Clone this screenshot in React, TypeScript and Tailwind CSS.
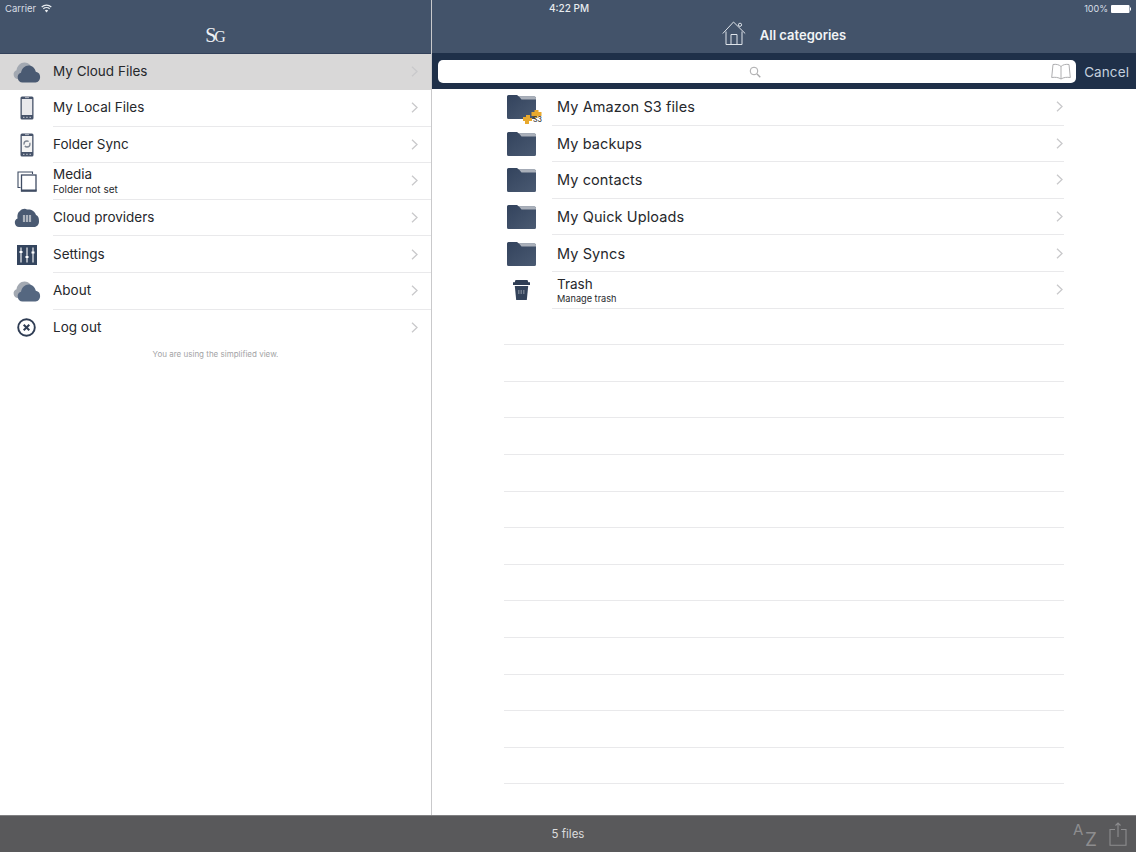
import React from "react";

const Chevron = () => (
  <svg width="7" height="11" viewBox="0 0 7 11" fill="none" className="shrink-0">
    <path d="M1 .8l5 4.700-5 4.700" stroke="#c9c9cb" strokeWidth="1.300" />
  </svg>
);

const Cloud = ({ back = "#a3a9b2", front = "#4a5a72" }: { back?: string; front?: string }) => (
  <svg width="28" height="21" viewBox="0 0 28 21">
    <path d="M5 17a4.500 4.500 0 0 1-1.500-8.700C4 4 7.500.5 11.500.5c2.500 0 4.500 1 6 3l-2 13.500z" fill={back} />
    <path d="M9.500 20.500a5 5 0 0 1-1.500-9.700C8.800 6.500 12 3.500 15.500 3.500c3.800 0 6.500 2.700 7.300 6.200A5.500 5.500 0 0 1 22.500 20.500z" fill={front} />
  </svg>
);

const Phone = ({ sync }: { sync?: boolean }) => (
  <svg width="14" height="24" viewBox="0 0 14 24">
    <rect x="0.500" y="0.500" width="13" height="23" rx="1.500" fill="#46536a" />
    <rect x="1.800" y="3" width="10.400" height="16" fill={sync ? "#f4f4f4" : "#e9e9ec"} />
    <rect x="5" y="1.300" width="4" height="0.800" fill="#c9ced6" />
    <path d="M3 21.300h1.500M6.200 21.300h1.500M9.500 21.300H11" stroke="#c9ced6" strokeWidth="1" />
    {sync && <circle cx="7" cy="11" r="3" fill="none" stroke="#7d8592" strokeWidth="1.300" strokeDasharray="7 1.500" />}
  </svg>
);

const Media = () => (
  <svg width="20" height="21" viewBox="0 0 20 21" fill="none">
    <path d="M3.500 16.500H1V1h14.500v2" stroke="#3f4c63" strokeWidth="1.100" />
    <rect x="4.500" y="4" width="14.500" height="16" fill="#fff" stroke="#3f4c63" strokeWidth="1.300" />
    <rect x="4" y="18.500" width="15.500" height="2" fill="#3f4c63" />
  </svg>
);

const Providers = () => (
  <svg width="26" height="22" viewBox="0 0 26 22">
    <path d="M5 20a4.500 4.500 0 0 1-1.500-8.600C3 8 4 5 6 4c1.500-2 5-3 7-1.500 4-.5 8 1.500 9 5.500 3 1.500 3 4 3 6.500 0 3-2 5.500-5 5.500z" fill="#4a5a72" />
    <path d="M10 8v7M13 8v7M16 8v7" stroke="#aeb4bd" strokeWidth="2.200" />
  </svg>
);

const Sliders = () => (
  <svg width="20" height="20" viewBox="0 0 20 20">
    <rect width="20" height="20" fill="#34455e" />
    <path d="M4 2.500v15M10 2.500v15M16 2.500v15" stroke="#fff" strokeWidth="1.100" />
    <path d="M2.500 7h3M8.500 12h3M14.500 7.500h3" stroke="#fff" strokeWidth="2" />
  </svg>
);

const LogOut = () => (
  <svg width="19" height="19" viewBox="0 0 19 19" fill="none">
    <circle cx="9.500" cy="9.500" r="8.300" stroke="#2f3d54" strokeWidth="1.900" />
    <path d="M6.700 6.700l5.600 5.600M12.300 6.700l-5.600 5.600" stroke="#2f3d54" strokeWidth="2" />
  </svg>
);

const Folder = ({ s3 }: { s3?: boolean }) => (
  <div className="relative w-[29px] h-[24px] shrink-0">
    <svg width="29" height="24" viewBox="0 0 29 24">
      <defs>
        <linearGradient id="folderFill" x1="0" y1="0" x2="1" y2="1">
          <stop offset="0" stopColor="#33435d" />
          <stop offset="1" stopColor="#4a5a72" />
        </linearGradient>
      </defs>
      <path d="M0 1.500A1.500 1.500 0 0 1 1.500 0H10l2 1.500h15.500A1.500 1.500 0 0 1 29 3v19.500a1.500 1.500 0 0 1-1.500 1.500h-26A1.500 1.500 0 0 1 0 22.500z" fill="url(#folderFill)" />
      <path d="M12 1.500h15.500A1.500 1.500 0 0 1 29 3v1.500H14.500z" fill="#aab0ba" />
    </svg>
    {s3 && (
      <>
        <svg width="22" height="14" viewBox="0 0 22 14" className="absolute left-[15px] top-[15px]">
          <path d="M9.500 2h3V0h4v2h3v4h-4v2h-3V6h-3zM1 7h3V5h4v3h2v3H7v3H3v-3H1z" fill="#e8a92e" />
        </svg>
        <span className="absolute left-[26px] top-[21px] text-[7px] leading-[8px] text-[#333] font-medium">S3</span>
      </>
    )}
  </div>
);

const Trash = () => (
  <svg width="17" height="20" viewBox="0 0 17 20">
    <path d="M2.500 0h12l.8 2.300H17V5H0V2.300h1.700z" fill="#2f3d54" />
    <path d="M1.800 6h13.400l-1.400 14H3.200z" fill="#33425a" />
    <path d="M5 11h7M5 13h7" stroke="#aeb4bd" strokeWidth="1.200" strokeDasharray="1.500 1" />
  </svg>
);

const Home = () => (
  <svg width="24" height="24" viewBox="0 0 24 24" fill="none" stroke="#dfe4ea" strokeWidth="1">
    <path d="M.8 12.500L11.500 1l11.700 11.500" />
    <path d="M4 10.500V23.500h16V10.500" />
    <path d="M9 23.500V13.500h6v10" />
    <circle cx="18" cy="3.800" r="1.600" />
  </svg>
);

const menu = [
  { icon: <Cloud />, label: "My Cloud Files", active: true },
  { icon: <Phone />, label: "My Local Files" },
  { icon: <Phone sync />, label: "Folder Sync" },
  { icon: <Media />, label: "Media", sub: "Folder not set" },
  { icon: <Providers />, label: "Cloud providers" },
  { icon: <Sliders />, label: "Settings" },
  { icon: <Cloud front="#556780" />, label: "About" },
  { icon: <LogOut />, label: "Log out", last: true },
];

const files = [
  { icon: <Folder s3 />, label: "My Amazon S3 files" },
  { icon: <Folder />, label: "My backups" },
  { icon: <Folder />, label: "My contacts" },
  { icon: <Folder />, label: "My Quick Uploads" },
  { icon: <Folder />, label: "My Syncs" },
  { icon: <Trash />, label: "Trash", sub: "Manage trash" },
];

export default function App() {
  return (
    <div className="w-[1136px] h-[852px] flex flex-col overflow-hidden bg-white relative font-['Inter','Liberation_Sans',sans-serif]">
      <div className="flex flex-1 min-h-0">
        <aside className="w-[432px] shrink-0 border-r border-[#c9c9cb] flex flex-col">
          <header className="h-[54px] bg-[#43536a] border-b border-[#33415a] shrink-0 relative flex items-end justify-center pb-[5px]">
            <div className="absolute left-[5px] top-[2px] flex items-center gap-[5px] text-[9.500px] leading-[13px] text-[#d8dee6]">
              <span>Carrier</span>
              <svg width="11" height="9" viewBox="0 0 11 9" fill="none" stroke="#e8ecf0">
                <path d="M0.700 3a7 7 0 0 1 9.600 0M2.300 4.800a4.700 4.700 0 0 1 6.400 0" strokeWidth="1.200" />
                <path d="M5.500 8.500L3.800 6.500a2.600 2.600 0 0 1 3.400 0z" fill="#e8ecf0" stroke="none" />
              </svg>
            </div>
            <div className="font-['Liberation_Serif',serif] text-[#eef1f4] flex items-baseline leading-[22px]">
              <span className="text-[20px]">S</span>
              <span className="text-[16px] -ml-[2px]">G</span>
            </div>
          </header>
          {menu.map((m) => (
            <div key={m.label} className={`${m.active ? "h-[36px] bg-[#d9d8d8]" : "h-[36.600px]"} shrink-0 flex items-stretch`}>
              <div className="w-[53px] shrink-0 flex items-center justify-center">{m.icon}</div>
              <div className={`flex-1 flex items-center pr-[13px] ${m.active ? "pb-[1px]" : ""} ${m.active || m.last ? "" : "border-b border-[#e9e9eb]"}`}>
                <div className={`flex-1 min-w-0 text-[#26282c] ${m.sub ? "pt-[2px]" : ""}`}>
                  <div className="text-[13.500px] leading-[15px]">{m.label}</div>
                  {m.sub && <div className="text-[10px] leading-[14px]">{m.sub}</div>}
                </div>
                <Chevron />
              </div>
            </div>
          ))}
          <div className="text-center text-[8px] leading-[11px] text-[#a3a3a5] mt-[3px]">You are using the simplified view.</div>
        </aside>
        <main className="flex-1 min-w-0 flex flex-col">
          <header className="h-[53px] bg-[#43536a] shrink-0 relative flex items-end justify-center pb-[8px] gap-[14px]">
            <span className="absolute left-[117px] top-[2px] text-[10px] leading-[13px] font-medium text-[#e8ecf0]">4:22 PM</span>
            <div className="absolute right-[5px] top-[2px] flex items-center gap-[3px] text-[9px] leading-[13px] text-[#d8dee6]">
              <span>100%</span>
              <svg width="20" height="8" viewBox="0 0 20 8">
                <rect width="18.500" height="8" rx="1" fill="#fff" />
                <rect x="19" y="2.500" width="1" height="3" fill="#fff" />
              </svg>
            </div>
            <Home />
            <span className="text-[13px] leading-[20px] font-semibold text-[#f2f4f6]">All categories</span>
          </header>
          <div className="h-[36px] bg-[#1f3049] shrink-0 flex items-center pl-[6px] pr-[7px] gap-[8px] pt-[1px]">
            <div className="flex-1 h-[23px] bg-white rounded-[5px] relative flex items-center justify-center pr-[5px]">
              <svg width="12" height="12" viewBox="0 0 12 12" fill="none" stroke="#a9a9ab" strokeWidth="1">
                <circle cx="5" cy="5" r="3.800" />
                <path d="M8 8l3.300 3.300" strokeWidth="1.300" />
              </svg>
              <svg width="20" height="17" viewBox="0 0 20 17" fill="none" stroke="#a5a5a7" strokeWidth="0.900" className="absolute right-[5px] top-[3px]">
                <path d="M10 3.500C8 1.500 5 1 2 1.500L0.700 14.500C4 14 7.500 14.300 10 16c2.500-1.700 6-2 9.300-1.500L18 1.500C15 1 12 1.500 10 3.500zM10 3.500V16" />
              </svg>
            </div>
            <span className="text-[13.500px] leading-[18px] tracking-[0.100px] text-[#c5d0df]">Cancel</span>
          </div>
          <div className="flex-1 min-h-0 pl-[72px] pr-[72px] flex flex-col">
            {files.map((f) => (
              <div key={f.label} className="h-[36.600px] shrink-0 flex items-stretch">
                <div className="w-[48px] shrink-0 flex items-center pl-[3px]">
                  <div className="w-[29px] flex justify-center">{f.icon}</div>
                </div>
                <div className="flex-1 flex items-center pl-[5px] pr-[1px] border-b border-[#e9e9eb]">
                  <div className={`flex-1 min-w-0 text-[#26282c] ${f.sub ? "pt-[2px]" : ""}`}>
                    <div className={f.sub ? "text-[13.500px] leading-[15px]" : "text-[14.500px] leading-[15px] tracking-[0.100px]"}>{f.label}</div>
                    {f.sub && <div className="text-[9.200px] leading-[13px]">{f.sub}</div>}
                  </div>
                  <Chevron />
                </div>
              </div>
            ))}
            {Array.from({ length: 13 }, (_, i) => (
              <div key={i} className="h-[36.600px] shrink-0 border-b border-[#e9e9eb]" />
            ))}
          </div>
        </main>
      </div>
      <footer className="h-[37px] shrink-0 bg-[#59595b] border-t border-[#808082] relative flex items-center justify-center pt-[1px]">
        <span className="text-[11.500px] text-[#dcdcdd]">5 files</span>
        <div className="absolute left-[1073px] top-[5px] w-[24px] h-[28px] text-[#8d8d8f]">
          <span className="absolute left-0 top-0 text-[15px] leading-[17px]">A</span>
          <span className="absolute left-[12px] top-[8px] text-[19px] leading-[21px]">Z</span>
        </div>
        <svg width="18" height="24" viewBox="0 0 18 24" fill="none" stroke="#8d8d8f" strokeWidth="1.100" className="absolute left-[1109px] top-[6px]">
          <path d="M6 7.500H1v15.800h16V7.500h-5M9 1v14M6.500 3.500L9 1l2.500 2.500" />
        </svg>
      </footer>
    </div>
  );
}
